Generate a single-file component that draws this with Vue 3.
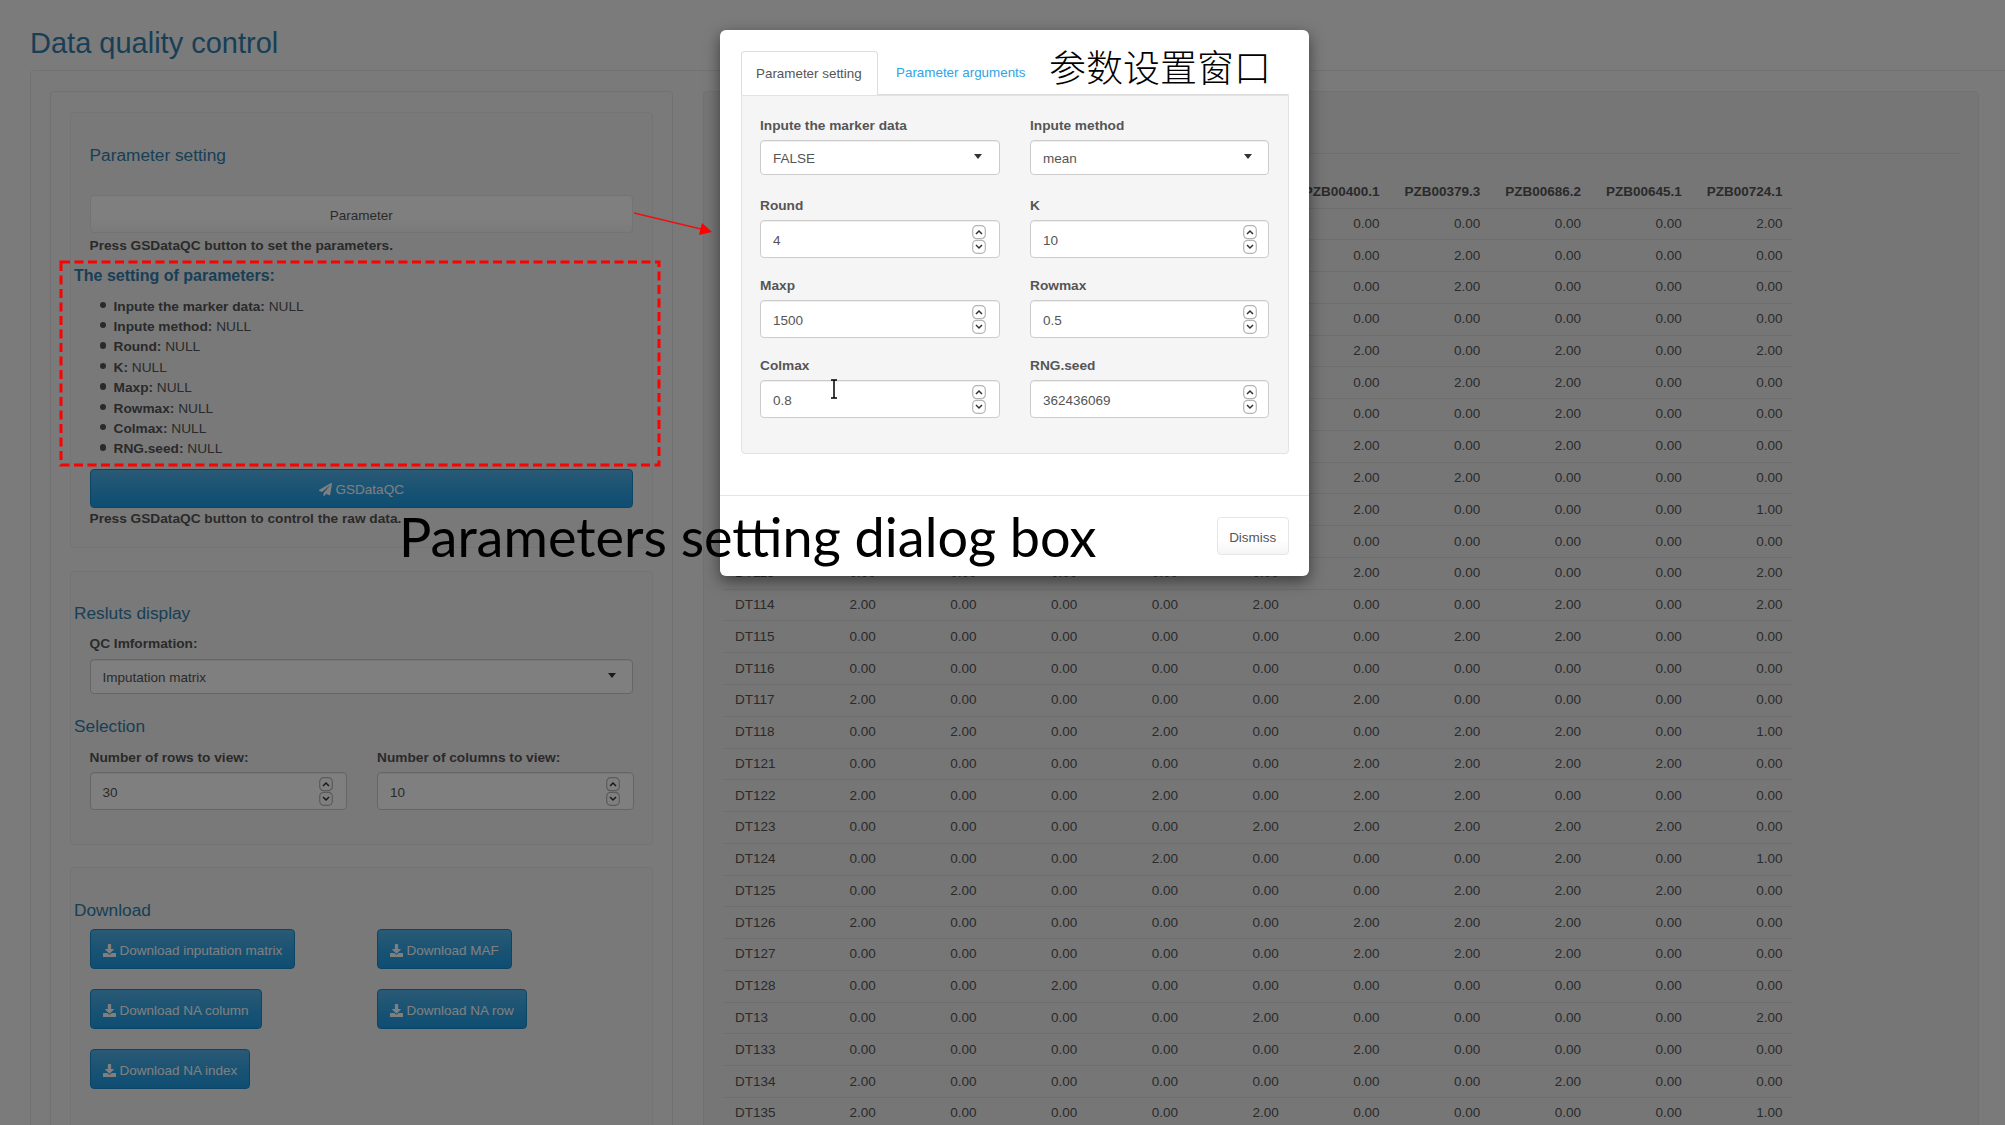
<template>
  <div class="page">
    <h1 class="title">Data quality control</h1>

    <div class="outer">
      <!-- left column -->
      <div class="well-col left-col">
        <section class="panel panel-param">
          <div class="field">
            <h4 class="sec sec-first">Parameter setting</h4>
            <button class="btn btn-plain btn-wide btn-param">Parameter</button>
            <p class="hint hint-top">Press GSDataQC button to set the parameters.</p>
          </div>
          <h4 class="sub">The setting of parameters:</h4>
          <ul class="params">
            <li v-for="p in paramNames" :key="p"><b>{{ p }}:</b> NULL</li>
          </ul>
          <div class="field">
            <button class="btn btn-primary btn-wide btn-run">
              <svg class="ico" viewBox="0 0 512 512"><path fill="currentColor" d="M476 3.2L12.5 270.6c-18.1 10.4-15.8 35.6 2.2 43.2L121 358.4l287.3-253.2c5.5-4.9 13.3 2.6 8.6 8.3L176 407v80.5c0 23.6 28.5 32.9 42.5 15.8L282 426l124.6 52.2c14.2 6 30.4-2.9 33-18.2l72-432C515 7.8 493.3-6.8 476 3.2z"/></svg>
              GSDataQC
            </button>
            <p class="hint hint-bottom">Press GSDataQC button to control the raw data.</p>
          </div>
        </section>

        <section class="panel panel-result">
          <h4 class="sec sec-result">Resluts display</h4>
          <div class="field">
            <label class="lbl lbl-qc">QC Imformation:</label>
            <div class="select select-qc">Imputation matrix<i class="caret"></i></div>
          </div>
          <h4 class="sec sec-selection">Selection</h4>
          <div class="field two">
            <div v-for="n in viewInputs" :key="n.label" class="two-item">
              <label class="lbl">{{ n.label }}</label>
              <div class="number">
                {{ n.value }}
                <svg class="spin" viewBox="0 0 14 29">
                  <rect x=".7" y=".7" width="12.6" height="13" rx="4" />
                  <rect x=".7" y="15.300" width="12.6" height="13" rx="4" />
                  <path d="M4 9l3-3 3 3M4 20l3 3 3-3" />
                </svg>
              </div>
            </div>
          </div>
        </section>

        <section class="panel panel-download">
          <h4 class="sec sec-first">Download</h4>
          <div class="field downloads">
            <div v-for="d in downloads" :key="d">
              <button class="btn btn-primary btn-dl">
                <svg class="ico" viewBox="0 0 512 512"><path fill="currentColor" d="M216 0h80c13.3 0 24 10.700 24 24v168h87.700c17.800 0 26.700 21.500 14.100 34.100L269.700 378.300c-7.500 7.500-19.800 7.500-27.300 0L90.100 226.100c-12.600-12.600-3.700-34.100 14.100-34.100H192V24c0-13.300 10.700-24 24-24zm296 376v112c0 13.300-10.700 24-24 24H24c-13.300 0-24-10.700-24-24V376c0-13.300 10.700-24 24-24h146.700l49 49c20.100 20.100 52.500 20.100 72.600 0l49-49H488c13.300 0 24 10.700 24 24z"/></svg>
                {{ d }}
              </button>
            </div>
          </div>
        </section>
      </div>

      <!-- right column with the table -->
      <div class="well-col right-col">
        <div class="tab-line"></div>
        <div class="grid">
          <div class="tr th">
            <div class="td"></div>
            <div v-for="h in headers" :key="h" class="td num">{{ h }}</div>
          </div>
          <div v-for="r in rows" :key="r.id" class="tr">
            <div class="td">{{ r.id }}</div>
            <div v-for="(v, i) in r.values" :key="i" class="td num">{{ v }}</div>
          </div>
        </div>
      </div>
    </div>

    <div class="backdrop"></div>

    <div class="modal">
      <div class="modal-body">
        <div class="tabs">
          <div class="tab active">Parameter setting</div>
          <div class="tab">Parameter arguments</div>
        </div>
        <div class="form-well">
          <div v-for="f in formFields" :key="f.label" class="group">
            <label class="lbl">{{ f.label }}</label>
            <div v-if="f.select" class="select">{{ f.value }}<i class="caret"></i></div>
            <div v-else class="number">
              {{ f.value }}
              <svg class="spin" viewBox="0 0 14 29">
                <rect x=".7" y=".7" width="12.6" height="13" rx="4" />
                <rect x=".7" y="15.300" width="12.6" height="13" rx="4" />
                <path d="M4 9l3-3 3 3M4 20l3 3 3-3" />
              </svg>
            </div>
          </div>
        </div>
      </div>
      <div class="modal-foot">
        <button class="btn btn-plain btn-dismiss">Dismiss</button>
      </div>
      <svg class="ibeam" viewBox="0 0 10 20">
        <path d="M2 1h6M2 19h6M5 1v18" />
      </svg>
    </div>

    <!-- slide annotations on top of the screenshot -->
    <svg class="marks" viewBox="0 0 2005 1125">
      <rect x="61" y="262" width="598" height="203" fill="none" stroke="#f00" stroke-width="3" stroke-dasharray="9 4.500" />
      <path d="M634 213L703 229.500" stroke="#ee1111" stroke-width="1.500" fill="none" />
      <path d="M702 223L712 232L699 235Z" fill="#f00" />
    </svg>
    <div class="note-cn">参数设置窗口</div>
    <div class="note-en">Parameters setting dialog box</div>
  </div>
</template>

<script setup>
const paramNames = ['Inpute the marker data', 'Inpute method', 'Round', 'K', 'Maxp', 'Rowmax', 'Colmax', 'RNG.seed']

const viewInputs = [
  { label: 'Number of rows to view:', value: '30' },
  { label: 'Number of columns to view:', value: '10' }
]

const downloads = [
  'Download inputation matrix',
  'Download MAF',
  'Download NA column',
  'Download NA row',
  'Download NA index'
]

const formFields = [
  { label: 'Inpute the marker data', value: 'FALSE', select: true },
  { label: 'Inpute method', value: 'mean', select: true },
  { label: 'Round', value: '4' },
  { label: 'K', value: '10' },
  { label: 'Maxp', value: '1500' },
  { label: 'Rowmax', value: '0.5' },
  { label: 'Colmax', value: '0.8' },
  { label: 'RNG.seed', value: '362436069' }
]

const headers = [
  'PZB00054.3', 'PZB00131.1', 'PZB00221.4', 'PZB00235.2', 'PZB00304.1',
  'PZB00400.1', 'PZB00379.3', 'PZB00686.2', 'PZB00645.1', 'PZB00724.1'
]

// one digit per column, the table always prints two decimals
const rawRows = [
  ['DT1', '0000000002'],
  ['DT10', '0000002000'],
  ['DT100', '0000002000'],
  ['DT101', '0000000000'],
  ['DT102', '0000020202'],
  ['DT103', '0000002200'],
  ['DT104', '0000000200'],
  ['DT105', '0000020200'],
  ['DT106', '0000022000'],
  ['DT107', '0000020001'],
  ['DT108', '0000000000'],
  ['DT113', '0000020002'],
  ['DT114', '2000200202'],
  ['DT115', '0000002200'],
  ['DT116', '0000000000'],
  ['DT117', '2000020000'],
  ['DT118', '0202002201'],
  ['DT121', '0000022220'],
  ['DT122', '2002022000'],
  ['DT123', '0000222220'],
  ['DT124', '0002000201'],
  ['DT125', '0200002220'],
  ['DT126', '2000022200'],
  ['DT127', '0000022200'],
  ['DT128', '0020000000'],
  ['DT13', '0000200002'],
  ['DT133', '0000020000'],
  ['DT134', '2000000200'],
  ['DT135', '2000200001']
]

const rows = rawRows.map(([id, digits]) => ({
  id,
  values: digits.split('').map(d => `${d}.00`)
}))
</script>

<style>
html, body {
  margin: 0;
  overflow: hidden;
  background: #f7f7f7;
}
</style>

<style scoped>
* {
  box-sizing: border-box;
}

.page {
  position: relative;
  width: 2005px;
  height: 1125px;
  overflow: hidden;
  padding-left: 30px;
  background: #f7f7f7;
  font-family: "Liberation Sans", Arial, sans-serif;
  font-size: 13.5px;
  line-height: 20px;
  color: #555;
}

.title {
  margin: 0;
  padding: 27px 0 0 0;
  height: 70px;
  font-size: 29px;
  line-height: 32px;
  font-weight: 400;
  color: #317eac;
}

.outer {
  display: flex;
  gap: 30px;
  width: 2000px;
  height: 1100px;
  padding: 20px 0 0 19px;
  background: #f5f5f5;
  border: 1px solid #e3e3e3;
  border-radius: 4px;
}

.well-col {
  height: 1100px;
  background: #f5f5f5;
  border: 1px solid #e3e3e3;
  border-radius: 4px;
}

.left-col {
  flex: 0 0 623px;
  padding: 20px 19px 0;
}

.right-col {
  flex: 0 0 1276px;
  padding: 0 0 0 19px;
  background: #ededed;
}

.panel {
  width: 583px;
  padding: 0 19px 0 3px;
  background: #f2f2f2;
  border: 1px solid #e8e8e8;
  border-radius: 4px;
}

.panel-param {
  height: 436px;
  margin-bottom: 23px;
}

.panel-result {
  height: 274px;
  margin-bottom: 22px;
}

.panel-download {
  height: 400px;
}

.field {
  margin-left: 15.500px;
}

.sec {
  margin: 0;
  font-size: 17.300px;
  line-height: 20px;
  font-weight: 400;
  color: #317eac;
}

.sec-first {
  padding-top: 32px;
}

.sec-result {
  padding-top: 31px;
}

.sec-selection {
  padding-top: 22.700px;
}

.sub {
  margin: 10px 0 0;
  font-size: 16px;
  line-height: 20px;
  font-weight: 700;
  color: #317eac;
}

.hint {
  margin: 0;
  font-size: 13.700px;
  font-weight: 700;
}

.hint-top {
  padding-top: 3px;
}

.hint-bottom {
  padding-top: 1px;
}

.params {
  margin: 10.500px 0 0 15.500px;
  padding: 0 0 0 24px;
  list-style: none;
  font-size: 13.700px;
}

.params li {
  position: relative;
  line-height: 20.400px;
}

.params li::before {
  content: "";
  position: absolute;
  left: -14px;
  top: 5px;
  width: 6.500px;
  height: 6.500px;
  border-radius: 50%;
  background: #555;
}

.btn {
  display: inline-flex;
  align-items: center;
  justify-content: center;
  gap: 4px;
  border-radius: 4px;
  font-family: inherit;
  font-size: 13.500px;
  padding: 3px 12px 0;
}

.btn-plain {
  color: #555;
  background: linear-gradient(#fff, #fff 60%, #f5f5f5);
  border: 1px solid #e6e6e6;
}

.btn-primary {
  color: #fff;
  background: linear-gradient(#54b4eb, #2fa4e7 60%, #1d9ce5);
  border: 1px solid #178acc;
}

.btn-wide {
  display: flex;
  width: 100%;
}

.btn-param {
  height: 38px;
  margin-top: 30px;
}

.btn-run {
  height: 39px;
  margin-top: 9.100px;
}

.ico {
  width: 13px;
  height: 13px;
}

.lbl {
  display: block;
  font-size: 13.700px;
  font-weight: 700;
  line-height: 20px;
}

.lbl-qc {
  padding-top: 11px;
}

.select,
.number {
  position: relative;
  background: #fff;
  border: 1px solid #ccc;
  border-radius: 4px;
  padding-left: 12px;
  color: #555;
  box-shadow: inset 0 1px 1px rgba(0, 0, 0, 0.075);
}

.select {
  height: 35px;
  margin-top: 4.500px;
  line-height: 35px;
}

.number {
  height: 38px;
  margin-top: 4px;
  line-height: 40px;
}

.caret {
  position: absolute;
  right: 16.500px;
  top: 13px;
  border-top: 5px solid #333;
  border-left: 4.500px solid transparent;
  border-right: 4.500px solid transparent;
}

.spin {
  position: absolute;
  right: 13px;
  top: 4px;
  width: 14px;
  height: 29px;
}

.group:nth-child(even) .spin {
  right: 11px;
}

.spin rect {
  fill: #fff;
  stroke: #b5b5b5;
  stroke-width: 1.200;
}

.spin path {
  fill: none;
  stroke: #333;
  stroke-width: 1.500;
}

.two {
  display: flex;
  gap: 30.500px;
  padding-top: 11.500px;
}

.two-item {
  flex: 0 0 257px;
}

.downloads {
  display: grid;
  grid-template-columns: 287px 1fr;
  row-gap: 20px;
  padding-top: 9.400px;
}

.btn-dl {
  height: 40px;
}

.tab-line {
  height: 62px;
  width: 1237px;
  border-bottom: 1px solid #ddd;
}

.grid {
  width: 1069.500px;
  margin-top: 22.500px;
}

.tr {
  display: grid;
  grid-template-columns: 62px repeat(10, 100.750px);
  height: 31.780px;
  align-items: center;
  border-bottom: 1px solid #ddd;
}

.th {
  height: 32px;
  font-weight: 700;
}

.td {
  padding-left: 12px;
  white-space: nowrap;
}

.num {
  padding: 0 10px 0 0;
  text-align: right;
}

.backdrop {
  position: absolute;
  inset: 0;
  background: rgba(0, 0, 0, 0.5);
}

.modal {
  position: absolute;
  left: 720px;
  top: 30px;
  width: 589px;
  height: 546px;
  background: #fff;
  border-radius: 6px;
  box-shadow: 0 5px 15px rgba(0, 0, 0, 0.5);
}

.modal-body {
  height: 466px;
  padding: 21px 20.500px 0 21px;
  border-bottom: 1px solid #e5e5e5;
}

.tabs {
  display: flex;
  height: 43.500px;
  border-bottom: 1px solid #ddd;
}

.tab {
  padding: 0 18px;
  line-height: 43px;
  font-size: 13.400px;
  color: #2fa4e7;
}

.tab.active {
  width: 137px;
  padding: 0 14px;
  height: 44px;
  color: #555;
  background: #fff;
  border: 1px solid #ddd;
  border-bottom: 0;
  border-radius: 4px 4px 0 0;
  white-space: nowrap;
}

.form-well {
  display: grid;
  grid-template-columns: 239.500px 239px;
  column-gap: 30.500px;
  grid-auto-rows: 80.200px;
  height: 359px;
  padding: 20px 18px 0;
  background: #f5f5f5;
  border: 1px solid #e3e3e3;
  border-radius: 0 0 4px 4px;
}

.modal-foot {
  display: flex;
  justify-content: flex-end;
  padding: 21px 20.500px 0 0;
}

.btn-dismiss {
  width: 71.500px;
  height: 38px;
  padding: 3px 0 0;
}

.ibeam {
  position: absolute;
  left: 109px;
  top: 349px;
  width: 10px;
  height: 20px;
}

.ibeam path {
  fill: none;
  stroke: #000;
  stroke-width: 1.500;
}

.marks {
  position: absolute;
  left: 0;
  top: 0;
  width: 2005px;
  height: 1125px;
}

.note-cn {
  position: absolute;
  left: 1049px;
  top: 44px;
  font-family: "Noto Sans CJK SC", "Liberation Serif", serif;
  font-size: 37px;
  line-height: 44px;
  font-weight: 300;
  color: #000;
}

.note-en {
  position: absolute;
  left: 399px;
  top: 504px;
  font-family: Lato, "Noto Sans", sans-serif;
  font-size: 54px;
  line-height: 66px;
  color: #000;
  white-space: nowrap;
}
</style>
